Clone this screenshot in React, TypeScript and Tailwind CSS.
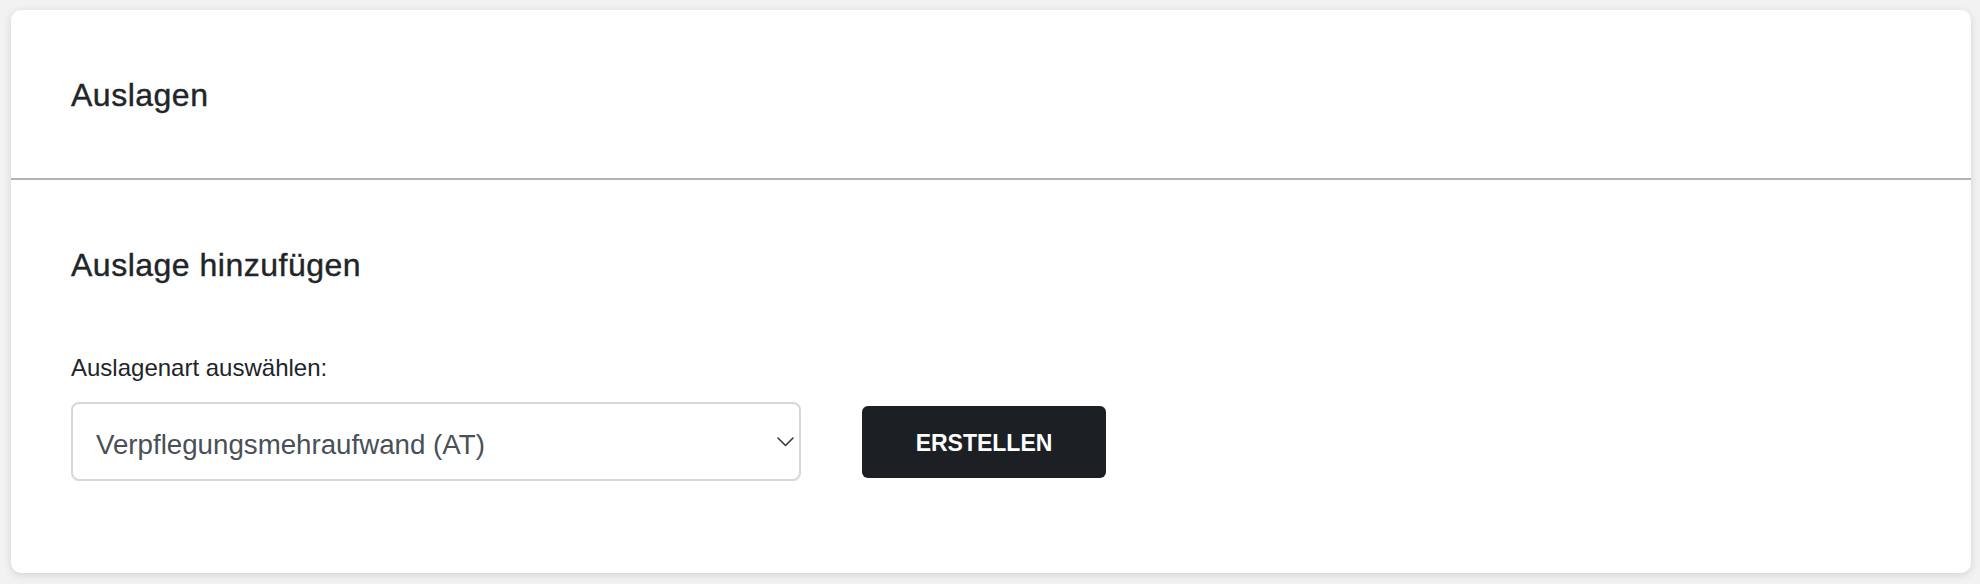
const Chevron = () => (
  <svg width="17" height="10" viewBox="0 0 17 10" fill="none">
    <path d="M1 1l7.5 7.5L16 1" stroke="#343a40" strokeWidth="1.6" strokeLinecap="round" strokeLinejoin="round" />
  </svg>
);

const App = () => {
  return (
    <div
      className="min-h-[584px] bg-[#f2f2f2] pl-[11px] pr-[9px] pt-[10px] pb-[11px] text-[#212529]"
      style={{ fontFamily: '"Liberation Sans", Arial, sans-serif' }}
    >
      <div className="h-[563px] rounded-[10px] bg-white shadow-[0_2px_8px_rgba(0,0,0,0.13)]">
        <div className="px-[60px] pt-[66px] pb-[64px]">
          <h2 className="text-[32px] leading-[38px] font-medium tracking-[0.5px] [-webkit-text-stroke:0.4px_#212529]">
            Auslagen
          </h2>
        </div>
        <div className="h-[2px] bg-[#b3b3b3]" />
        <div className="px-[60px] pt-[66px]">
          <h3 className="text-[32px] leading-[38px] font-medium tracking-[0.5px] [-webkit-text-stroke:0.4px_#212529]">
            Auslage hinzufügen
          </h3>
          <label className="mt-[66px] block text-[24px] leading-[36px]">Auslagenart auswählen:</label>
          <div className="mt-[16px] flex items-center gap-[61px]">
            <div className="flex h-[79px] w-[730px] items-center justify-between rounded-[8px] border-2 border-[#d3d8dc] pl-[23px] pr-[5px]">
              <span className="pt-[6px] text-[27.7px] leading-[32px] text-[#495057]">Verpflegungsmehraufwand (AT)</span>
              <Chevron />
            </div>
            <button className="flex h-[72px] w-[244px] items-center justify-center rounded-[6px] bg-[#1c2024] pt-[4px] text-[23px] font-bold text-white">
              ERSTELLEN
            </button>
          </div>
        </div>
      </div>
    </div>
  );
};

export default App;
